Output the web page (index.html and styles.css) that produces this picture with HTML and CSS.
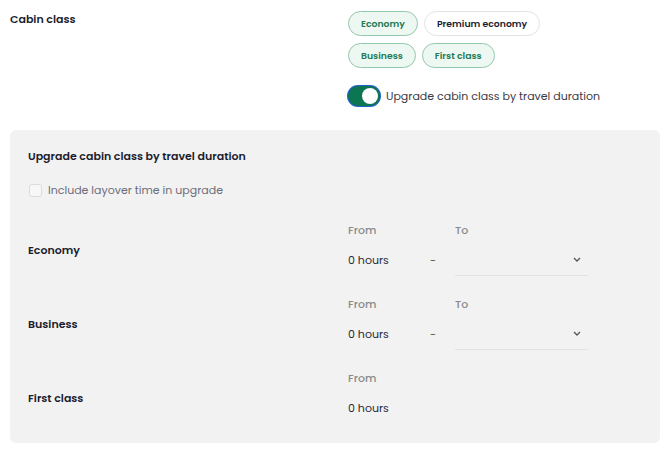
FILE: index.html
```html
<!DOCTYPE html>
<html lang="en">
<head>
    <meta charset="UTF-8">
    <meta name="viewport" content="width=device-width, initial-scale=1.0">
    <title>Cabin class</title>
    <link rel="stylesheet" href="styles.css">
</head>
<body>

<div class="page">
  <div class="cabin">
    <div class="cabin-label">Cabin class</div>
    <div class="cabin-options">
      <div class="chips">
        <button class="chip selected">Economy</button>
        <button class="chip">Premium economy</button>
        <button class="chip selected">Business</button>
        <button class="chip selected">First class</button>
      </div>
      <label class="toggle-row">
        <span class="toggle on"><span class="knob"></span></span>
        <span>Upgrade cabin class by travel duration</span>
      </label>
    </div>
  </div>

  <div class="panel">
    <h2>Upgrade cabin class by travel duration</h2>
    <label class="check-row">
      <span class="checkbox"></span>
      <span>Include layover time in upgrade</span>
    </label>

    <div class="rule">
      <div class="rule-name">Economy</div>
      <div class="rule-fields">
        <div class="field-label">From</div>
        <div></div>
        <div class="field-label">To</div>
        <div class="value">0 hours</div>
        <div class="dash">-</div>
        <div class="select">
          <svg width="8" height="5" viewBox="0 0 8 5"><path d="M1 1 L4 4 L7 1" fill="none" stroke="#555" stroke-width="1.3"/></svg>
        </div>
      </div>
    </div>

    <div class="rule">
      <div class="rule-name">Business</div>
      <div class="rule-fields">
        <div class="field-label">From</div>
        <div></div>
        <div class="field-label">To</div>
        <div class="value">0 hours</div>
        <div class="dash">-</div>
        <div class="select">
          <svg width="8" height="5" viewBox="0 0 8 5"><path d="M1 1 L4 4 L7 1" fill="none" stroke="#555" stroke-width="1.3"/></svg>
        </div>
      </div>
    </div>

    <div class="rule">
      <div class="rule-name">First class</div>
      <div class="rule-fields">
        <div class="field-label">From</div>
        <div></div>
        <div></div>
        <div class="value">0 hours</div>
      </div>
    </div>
  </div>
</div>

</body>
</html>
```

FILE: styles.css
```css
body {
    margin: 0;
    font-family: "Poppins", "Inter", "Noto Sans", sans-serif;
    font-size: 11px;
    color: #1b1d2e;
    background: #fff;
}
.page {
    padding: 11px 10px 10px;
}
.cabin {
    display: grid;
    grid-template-columns: 338px 1fr;
}
.cabin-label {
    font-weight: 600;
    font-size: 11px;
    line-height: 16px;
}
.chips {
    display: flex;
    flex-wrap: wrap;
    gap: 7px 6px;
    width: 200px;
}
.chip {
    height: 25px;
    padding: 0 12px;
    border-radius: 13px;
    border: 1px solid #e3e3e3;
    background: #fff;
    font-family: inherit;
    font-size: 9.3px;
    font-weight: 600;
    color: #1b1d2e;
}
.chip.selected {
    background: #eef8f2;
    border-color: #94c8ad;
    color: #217a52;
}
.toggle-row {
    display: flex;
    align-items: center;
    gap: 6px;
    margin-top: 18px;
    color: #3a3a44;
}
.toggle {
    width: 32px;
    height: 20px;
    border-radius: 11px;
    background: #0c7552;
    box-shadow: 0 0 0 1px #1f5fcc;
    display: flex;
    align-items: center;
    justify-content: flex-end;
    padding: 0 2px;
    box-sizing: border-box;
}
.knob {
    width: 16px;
    height: 16px;
    border-radius: 50%;
    background: #fff;
}
.panel {
    margin-top: 24px;
    background: #f2f2f2;
    border-radius: 6px;
    padding: 18px 18px 13px;
}
.panel h2 {
    margin: 0;
    font-size: 11px;
    font-weight: 600;
    line-height: 16px;
}
.check-row {
    display: flex;
    align-items: center;
    gap: 6px;
    margin-top: 18px;
    color: #6c6c78;
}
.checkbox {
    width: 11px;
    height: 11px;
    border: 1px solid #dcdcdc;
    border-radius: 3px;
    background: #f7f7f7;
    margin-left: 1px;
}
.rule {
    display: grid;
    grid-template-columns: 320px 1fr;
    align-items: center;
    height: 74px;
}
.rule:first-of-type {
    margin-top: 9px;
}
.rule-name {
    font-weight: 600;
    padding-top: 10px;
}
.rule-fields {
    display: grid;
    grid-template-columns: 82px 25px 133px;
    grid-template-rows: 30px 30px;
    align-items: center;
}
.field-label {
    color: #8a8a8a;
    font-weight: 500;
}
.value {
    color: #2a2a36;
}
.dash {
    color: #555;
}
.select {
    height: 30px;
    border-bottom: 1px solid #e2e2e2;
    display: flex;
    align-items: center;
    justify-content: flex-end;
    padding-right: 7px;
}
```
